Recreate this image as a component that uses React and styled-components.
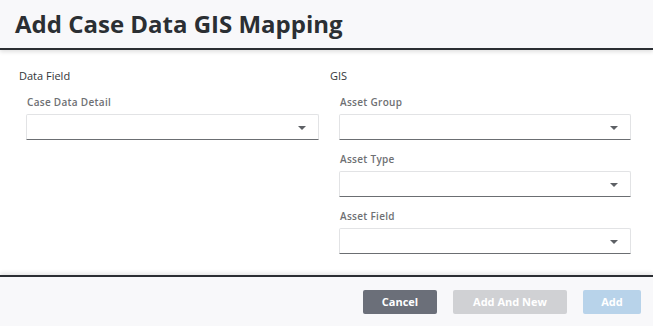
import React from 'react';
import styled, { createGlobalStyle } from 'styled-components';

const GlobalStyle = createGlobalStyle`
  html, body {
    margin: 0;
    padding: 0;
    background: #ffffff;
    font-family: "Open Sans", "Noto Sans", sans-serif;
  }
`;

const Dialog = styled.div`
  width: 653px;
  height: 326px;
  display: flex;
  flex-direction: column;
  background: #ffffff;
  overflow: hidden;
`;

const Header = styled.header`
  height: 48px;
  flex-shrink: 0;
  background: #f8f8fa;
  border-bottom: 2px solid #2b2e33;
  box-shadow: 0 2px 4px rgba(0, 0, 0, 0.12);
  display: flex;
  align-items: center;
  padding: 0 15px;
  position: relative;
  z-index: 1;
`;

const Title = styled.h1`
  margin: 0 0 1px;
  font-size: 24px;
  font-weight: 700;
  color: #2b2f33;
`;

const Body = styled.main`
  flex: 1;
  min-height: 0;
  display: grid;
  grid-template-columns: 311px 1fr;
  padding: 19px 22px 0 19px;
`;

const Column = styled.section`
  display: flex;
  flex-direction: column;
`;

const SectionTitle = styled.div`
  font-size: 11px;
  color: #333639;
  line-height: 14px;
  margin-bottom: 13px;
`;

const Field = styled.div`
  display: flex;
  flex-direction: column;
  padding-left: ${(p) => p.$indent}px;
  padding-right: ${(p) => p.$trail}px;
  margin-bottom: 13px;
`;

const Label = styled.label`
  font-size: 10px;
  font-weight: 600;
  color: #6e7073;
  letter-spacing: 0.3px;
  line-height: 12px;
  margin-bottom: 6px;
  padding-left: 1px;
`;

const Select = styled.div`
  height: 24px;
  border: 1px solid #e2e3e5;
  border-bottom: 1px solid #6b6e72;
  border-radius: 2px 2px 0 0;
  background: #ffffff;
  display: flex;
  align-items: center;
  justify-content: flex-end;
  padding-right: 12px;
`;

const Caret = styled.span`
  width: 0;
  height: 0;
  margin-top: 1px;
  border-left: 4px solid transparent;
  border-right: 4px solid transparent;
  border-top: 4px solid #5d6065;
`;

const Footer = styled.footer`
  height: 49px;
  flex-shrink: 0;
  background: #f8f8fa;
  border-top: 2px solid #2b2e33;
  box-shadow: 0 -2px 4px rgba(0, 0, 0, 0.1);
  display: flex;
  align-items: center;
  justify-content: flex-end;
  gap: 16px;
  padding: 0 12px 0 0;
`;

const Button = styled.button`
  height: 24px;
  width: ${(p) => p.$w}px;
  padding: 0;
  border: none;
  border-radius: 2px;
  background: ${(p) => p.$bg};
  color: #ffffff;
  font-family: "Open Sans", "Noto Sans", sans-serif;
  font-size: 11px;
  font-weight: 700;
  cursor: pointer;
`;

const SelectField = ({ label, indent, trail = 0 }) => (
  <Field $indent={indent} $trail={trail}>
    <Label>{label}</Label>
    <Select>
      <Caret />
    </Select>
  </Field>
);

export default function App() {
  return (
    <>
      <GlobalStyle />
      <Dialog>
        <Header>
          <Title>Add Case Data GIS Mapping</Title>
        </Header>
        <Body>
          <Column>
            <SectionTitle>Data Field</SectionTitle>
            <SelectField label="Case Data Detail" indent={7} trail={11} />
          </Column>
          <Column>
            <SectionTitle>GIS</SectionTitle>
            <SelectField label="Asset Group" indent={9} />
            <SelectField label="Asset Type" indent={9} />
            <SelectField label="Asset Field" indent={9} />
          </Column>
        </Body>
        <Footer>
          <Button $bg="#6b6f79" $w={74}>Cancel</Button>
          <Button $bg="#d0d1d4" $w={114}>Add And New</Button>
          <Button $bg="#b8d3ea" $w={58}>Add</Button>
        </Footer>
      </Dialog>
    </>
  );
}
